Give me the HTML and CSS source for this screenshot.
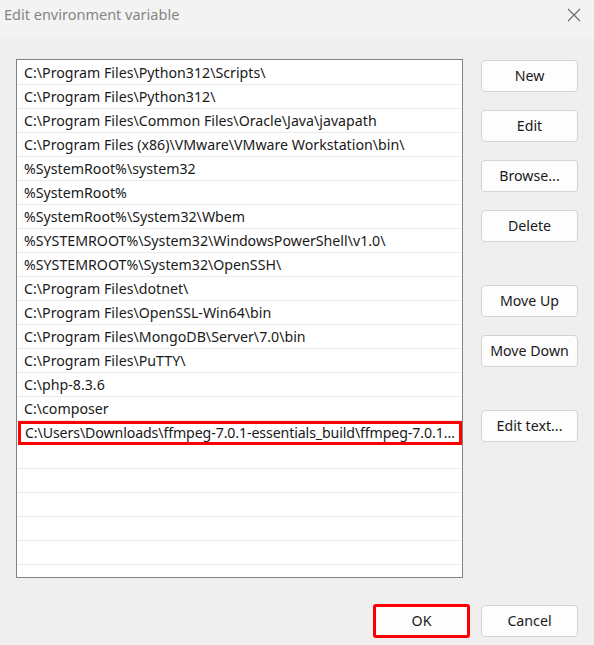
FILE: index.html
```html
<!DOCTYPE html>
<html>
<head>
<meta charset="utf-8">
<link rel="stylesheet" href="styles.css">
</head>
<body>
<div class="dialog">
  <div class="titlebar">
    <span class="title">Edit environment variable</span>
    <svg class="close" width="14" height="14" viewBox="0 0 14 14"><path d="M1 1L13 13M13 1L1 13" stroke="#6b6b6b" stroke-width="1.1" fill="none"/></svg>
  </div>
  <div class="content">
    <div class="main">
      <div class="list">
        <div class="row">C:\Program Files\Python312\Scripts\</div>
        <div class="row">C:\Program Files\Python312\</div>
        <div class="row">C:\Program Files\Common Files\Oracle\Java\javapath</div>
        <div class="row">C:\Program Files (x86)\VMware\VMware Workstation\bin\</div>
        <div class="row">%SystemRoot%\system32</div>
        <div class="row">%SystemRoot%</div>
        <div class="row">%SystemRoot%\System32\Wbem</div>
        <div class="row">%SYSTEMROOT%\System32\WindowsPowerShell\v1.0\</div>
        <div class="row">%SYSTEMROOT%\System32\OpenSSH\</div>
        <div class="row">C:\Program Files\dotnet\</div>
        <div class="row">C:\Program Files\OpenSSL-Win64\bin</div>
        <div class="row">C:\Program Files\MongoDB\Server\7.0\bin</div>
        <div class="row">C:\Program Files\PuTTY\</div>
        <div class="row">C:\php-8.3.6</div>
        <div class="row">C:\composer</div>
        <div class="row selected">C:\Users\Downloads\ffmpeg-7.0.1-essentials_build\ffmpeg-7.0.1…</div>
        <div class="row"></div>
        <div class="row"></div>
        <div class="row"></div>
        <div class="row"></div>
        <div class="row"></div>
        <div class="row last"></div>
      </div>
      <div class="side">
        <div class="group">
          <button class="btn">New</button>
          <button class="btn">Edit</button>
          <button class="btn">Browse...</button>
          <button class="btn">Delete</button>
        </div>
        <div class="group">
          <button class="btn">Move Up</button>
          <button class="btn">Move Down</button>
        </div>
        <div class="group">
          <button class="btn">Edit text...</button>
        </div>
      </div>
    </div>
    <div class="footer">
      <button class="btn ok">OK</button>
      <button class="btn">Cancel</button>
    </div>
  </div>
</div>
</body>
</html>
```
FILE: styles.css
```css
html, body {
  margin: 0;
  padding: 0;
}
body {
  width: 594px;
  height: 645px;
  background: #efefef;
  font-family: "Noto Sans", "Open Sans", sans-serif;
  overflow: hidden;
}
.dialog {
  display: flex;
  flex-direction: column;
  height: 645px;
}
.titlebar {
  height: 37px;
  background: #f3f3f3;
  display: flex;
  align-items: flex-start;
  justify-content: space-between;
  padding: 0 13px 0 4px;
  box-sizing: border-box;
}
.title {
  font-size: 14.5px;
  color: #858585;
  line-height: 16px;
  margin-top: 6px;
}
.close {
  margin-top: 8px;
}
.content {
  padding: 22px 16px 0 16px;
}
.main {
  display: flex;
  gap: 18px;
}
.list {
  width: 447px;
  height: 519px;
  box-sizing: border-box;
  border: 1px solid #838383;
  background: #fff;
  padding: 1px 1px 0 1px;
  overflow: hidden;
}
.row {
  height: 24px;
  box-sizing: border-box;
  border-bottom: 1px solid #ebebeb;
  font-size: 14.2px;
  line-height: 23px;
  color: #1a1a1a;
  padding-left: 6px;
  white-space: nowrap;
  overflow: hidden;
}
.row.selected {
  border: 3px solid #ff0000;
  line-height: 18px;
  padding-left: 4px;
  padding-right: 2px;
  margin-right: -1px;
  letter-spacing: -0.12px;
}
.side {
  display: flex;
  flex-direction: column;
  gap: 43px;
  padding-top: 1px;
}
.group {
  display: flex;
  flex-direction: column;
  gap: 18px;
}
.btn {
  width: 97px;
  height: 32px;
  box-sizing: border-box;
  border: 1px solid #d3d3d3;
  border-radius: 4px;
  background: #fdfdfd;
  font-family: "Noto Sans", "Open Sans", sans-serif;
  font-size: 14.2px;
  color: #1a1a1a;
  padding: 0;
  line-height: 20px;
}
.footer {
  display: flex;
  justify-content: flex-end;
  gap: 11px;
  margin-top: 26px;
  align-items: center;
}
.btn.ok {
  border: 3px solid #ff0000;
  border-radius: 3px;
  height: 34px;
  width: 97px;
}
```
